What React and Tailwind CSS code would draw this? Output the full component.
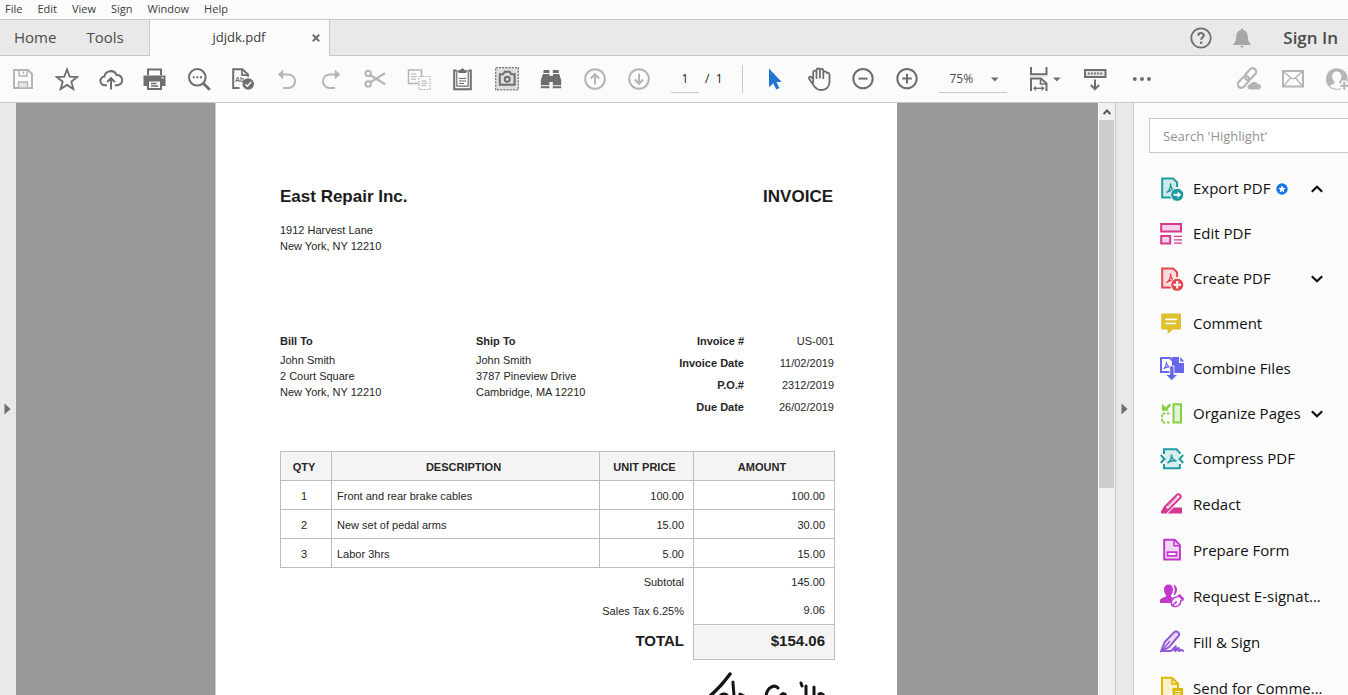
import React from "react";

/* ---------- shared svg wrappers ---------- */

function Svg({ children, className = "", size = 24 }) {
  return (
    <svg
      width={size}
      height={size}
      viewBox="0 0 24 24"
      fill="none"
      stroke="currentColor"
      strokeWidth="2"
      aria-hidden="true"
      className={"shrink-0 " + className}
    >
      {children}
    </svg>
  );
}

function Caret({ className = "" }) {
  return (
    <svg width="8" height="5" viewBox="0 0 8 5" aria-hidden="true" className={className}>
      <path d="M0 0.5h7.6L3.8 4.5z" fill="#6e6e6e" />
    </svg>
  );
}

/* ---------- toolbar icons ---------- */

const SaveIcon = () => (
  <Svg>
    <path d="M3 3h14l4 4v14H3z" />
    <path d="M8 3v6h8V3M12.5 4.5v2.5" strokeWidth="1.5" />
    <path d="M7.5 21v-6h9v6z" fill="#e4e4e4" strokeWidth="1.3" />
  </Svg>
);
const StarIcon = () => (
  <Svg>
    <path strokeWidth="1.8" d="M12 2.4l2.7 7.3 7.6.3-6 4.7 2.1 7.4L12 17.9l-6.4 4.2 2.1-7.4-6-4.7 7.6-.3z" />
  </Svg>
);
const CloudUpIcon = () => (
  <Svg>
    <path d="M8 18.2H6a4.3 4.3 0 0 1-.6-8.6A6.4 6.4 0 0 1 17.6 8a5.1 5.1 0 0 1 1 10.2H16" />
    <path d="M12 22.5V12M8.2 15l3.8-3.8 3.8 3.8" />
  </Svg>
);
const PrintIcon = () => (
  <Svg>
    <path d="M5 8V2.5h13V8" />
    <path d="M.5 8.500h22V19H18v-4.500H5V19H.5z" fill="currentColor" stroke="none" />
    <path d="M5 13.500h13V22H5z" fill="#fbfbfb" />
    <path d="M8 16.500h5.500M8 19h7" strokeWidth="1.3" />
    <path d="M18.500 10.800h2" stroke="#fbfbfb" strokeWidth="1.4" />
  </Svg>
);
const SearchIcon = () => (
  <Svg>
    <circle cx="10.3" cy="10.3" r="8.3" />
    <path d="M16.4 16.4l6.4 6.4" strokeWidth="2.8" />
    <path d="M5.8 10.3h9.4" strokeDasharray="2 1.6" />
  </Svg>
);
const SpellIcon = () => (
  <Svg>
    <path d="M8.5 21H2.2V2.2h9.3L17 7.6v2.2" />
    <path d="M11 2.5v5.6h5.8" strokeWidth="1.6" />
    <text x="4" y="15.4" fontSize="7" fontWeight="700" fontFamily="Liberation Sans, sans-serif" fill="currentColor" stroke="none">Ab</text>
    <circle cx="17.2" cy="17" r="5.8" fill="currentColor" stroke="none" />
    <path d="M14.4 17.2l2 2 3.7-4.2" stroke="#fbfbfb" strokeWidth="1.5" />
  </Svg>
);
const UndoPath = () => (
  <>
    <path d="M2.8 7.4L8.2 2.4v10z" fill="currentColor" stroke="none" />
    <path d="M8 7.4h5.3a6.7 6.7 0 0 1 0 13.6H8" />
  </>
);
const UndoIcon = () => (
  <Svg>
    <UndoPath />
  </Svg>
);
const RedoIcon = () => (
  <Svg>
    <g transform="translate(24 0) scale(-1 1)">
      <UndoPath />
    </g>
  </Svg>
);
const CutIcon = () => (
  <Svg>
    <circle cx="5.2" cy="6.4" r="2.7" />
    <circle cx="5.2" cy="17" r="2.7" />
    <path d="M7.2 8L22 17.3M7.2 15.4L22 6.1" strokeWidth="2.3" />
  </Svg>
);
const CopyIcon = () => (
  <Svg>
    <path d="M11.5 16.5h-10V3h13v7" strokeWidth="1.5" />
    <path d="M4 7h5M4 9.7h6M4 12.3h5" strokeWidth="1" />
    <path d="M12 9.5h11v13H12z" strokeWidth="1.2" strokeDasharray="2 1.2" />
    <path d="M14.5 14h4.5M14.5 16.2h6M14.5 18.5h4.5" strokeWidth="1" />
  </Svg>
);
const ClipboardIcon = () => (
  <Svg>
    <path d="M5.500 3.600H3.200v18.700h16.600V3.600h-2.300" />
    <path d="M5.800 4h11.400v15.200H5.800z" strokeWidth="1.2" />
    <path d="M7.500 2.900h2.100a1.900 1.900 0 0 1 3.700 0h2.100v3H7.500z" fill="currentColor" stroke="none" />
    <path d="M8 11.500h7M8 14h7M8 16.500h5" strokeWidth="1.1" />
  </Svg>
);
const SnapshotIcon = () => (
  <Svg>
    <path d="M.7.7h22.6v22.1H.7z" fill="#dedede" strokeWidth="1.2" strokeDasharray="2 1.2" />
    <path d="M4.8 7.2h3.4l1.6-2.5h4.8l1.6 2.5h3.4v10.6H4.8z" />
    <circle cx="12.2" cy="12.2" r="2.5" strokeWidth="2" />
  </Svg>
);
const BinocularsIcon = () => (
  <Svg>
    <g fill="currentColor" stroke="none">
      <path d="M4.5 3h6v3h-6zM13.8 3h6v3h-6z" />
      <path d="M4 7h6.5v1.8H14V7h6.2l2 6v5.3h-8.4V15h-3.4v3.3H1.8V13z" />
      <path d="M1.8 19.3h8.6v2H1.8zM13.8 19.3h8.4v2h-8.4z" />
    </g>
  </Svg>
);
const UpIcon = () => (
  <Svg>
    <circle cx="12" cy="12" r="9.8" />
    <path d="M12 17.6V7.5M7.8 11.5L12 7.2l4.2 4.3" />
  </Svg>
);
const DownIcon = () => (
  <Svg>
    <circle cx="12" cy="12" r="9.8" />
    <path d="M12 6.4v10.1M7.8 12.5l4.2 4.3 4.2-4.3" />
  </Svg>
);
const CursorIcon = () => (
  <Svg>
    <path d="M6 1.5v18.7l4.3-4 2.9 6.3 3.2-1.5-2.9-6h5.2z" fill="#1f76d3" stroke="none" />
  </Svg>
);
const HandIcon = () => (
  <Svg>
    <path
      strokeWidth="1.8"
      strokeLinecap="round"
      strokeLinejoin="round"
      d="M6.2 15.5V5.2a1.6 1.6 0 0 1 3.3 0v6M9.5 10.5V3.2a1.7 1.7 0 0 1 3.4 0v7.5M12.9 10.5V3.6a1.7 1.7 0 0 1 3.4 0v7.6M16.3 11V6.2a1.7 1.7 0 0 1 3.5-.2c.4-.5 2.7-.3 2.7 1.4v7.4c0 4.6-3 8.2-7.6 8.2-4 0-6-1.2-8.2-4.6l-4.6-6.6c-1-1.5.9-2.9 2.2-1.8l2 2"
    />
  </Svg>
);
const MinusIcon = () => (
  <Svg>
    <circle cx="12" cy="11.6" r="9.7" />
    <path d="M7.5 11.6h9" />
  </Svg>
);
const PlusIcon = () => (
  <Svg>
    <circle cx="12" cy="11.6" r="9.7" />
    <path d="M7.2 11.6h9.6M12 6.8v9.6" />
  </Svg>
);
const FitIcon = () => (
  <Svg>
    <path d="M2 0v7.2h15.5V0" />
    <path d="M1 8.8h17.5" stroke="#dcdcdc" strokeWidth="1.5" />
    <path d="M2 24V11.5h10l5.5 5V24" />
    <path d="M11.5 11.5v5.5h6" strokeWidth="1.6" />
    <path d="M6 21.3h8" strokeWidth="1.4" />
    <path d="M4 21.3l3-2.6v5.2zM15.6 21.3l-3-2.6v5.2z" fill="currentColor" stroke="none" />
  </Svg>
);
const ScrollIcon = () => (
  <Svg>
    <path d="M2 3h20.5v7H2z" fill="#e4e4e4" />
    <path d="M4.8 6.5h15" strokeDasharray="1.8 1.3" strokeWidth="1.8" />
    <path d="M12 12.5v9M7.8 18l4.2 4 4.2-4" />
  </Svg>
);
const MoreIcon = () => (
  <Svg>
    <g fill="currentColor" stroke="none">
      <circle cx="4.8" cy="12" r="2" />
      <circle cx="12" cy="12" r="2" />
      <circle cx="19" cy="12" r="2" />
    </g>
  </Svg>
);
const LinkIcon = () => (
  <Svg>
    <g transform="rotate(-48 10 11)" strokeWidth="2.2">
      <rect x="-2" y="7.5" width="13.500" height="7" rx="3.5" />
      <rect x="8.500" y="7.5" width="13.500" height="7" rx="3.5" />
    </g>
    <path d="M13 23a3 3 0 0 1 0-6.200 4.400 4.400 0 0 1 8-.2 3.200 3.200 0 0 1 .8 6.400z" fill="currentColor" stroke="#fbfbfb" strokeWidth="1" />
  </Svg>
);
const MailIcon = () => (
  <Svg>
    <path d="M2 4h20v15.5H2z" />
    <path d="M2.5 4.5l7.2 6.2a3.6 3.6 0 0 0 4.6 0l7.2-6.2M2.5 19l7-8M21.5 19l-7-8" strokeWidth="1.3" />
  </Svg>
);
const PersonIcon = () => (
  <Svg>
    <circle cx="11.8" cy="12" r="10.8" fill="currentColor" stroke="none" />
    <path d="M11.8 4.6c-3 0-4.6 2.3-4.6 4.9 0 2.1.9 4.1 2.2 5.3v1.6c-1.8.9-3.9 1.3-4.8 2.6a10 10 0 0 0 14.4 0c-.9-1.3-3-1.7-4.8-2.6v-1.6c1.3-1.2 2.2-3.2 2.2-5.3 0-2.6-1.6-4.9-4.6-4.9z" fill="#fbfbfb" stroke="none" />
    <path d="M19 13.5v10M14 18.7h10" stroke="#fbfbfb" strokeWidth="5" />
    <path d="M19.2 14.8v8M15.2 18.8h8.8" />
  </Svg>
);

/* ---------- tool panel icons ---------- */

const pdfGlyph = "M6.4 15.6c2.4-1.4 4.3-4.8 4.2-9.2 0 4 1.9 6.6 5 7.2-3-.8-6.6.1-9.2 2z";

const ExportIcon = () => (
  <Svg>
    <path d="M11 20.6H2.2V1.4h10.9l4 4V10" fill="#cfe8e9" stroke="#1f9aa0" />
    <path d={pdfGlyph} stroke="#1f9aa0" strokeWidth="1.3" />
    <circle cx="17.2" cy="17.8" r="6.6" fill="#1f9aa0" stroke="#fbfbfb" strokeWidth="1" />
    <path d="M13.5 17.8h5" stroke="#fff" />
    <path d="M17.6 14.6l3.6 3.2-3.6 3.2z" fill="#fff" stroke="none" />
  </Svg>
);
const CreateIcon = () => (
  <Svg>
    <path d="M11 20.6H2.2V1.4h10.9l4 4V10" fill="#f9dcde" stroke="#e34850" />
    <path d={pdfGlyph} stroke="#e34850" strokeWidth="1.3" />
    <circle cx="17.2" cy="17.8" r="6.6" fill="#e34850" stroke="#fbfbfb" strokeWidth="1" />
    <path d="M13.4 17.8h7.6M17.2 14v7.6" stroke="#fff" />
  </Svg>
);
const EditIcon = () => (
  <Svg>
    <g stroke="#d83790">
      <path d="M1.2 2h19.8v7.6H1.2zM1.2 14h9v7.6h-9z" fill="#f5d2e7" />
      <path d="M14 14.4h8M14 17.8h8M14 21.2h8" strokeWidth="1.3" />
    </g>
  </Svg>
);
const CommentIcon = () => (
  <Svg>
    <path d="M2.5 1.5h17.2q1.3 0 1.3 1.3v13.4q0 1.3-1.3 1.3H13L7.6 22v-4.5H2.5q-1.3 0-1.3-1.3V2.800q0-1.300 1.3-1.300z" fill="#dfbf2b" stroke="none" />
    <path d="M5.2 7.400h12M5.200 11.500h10.500" stroke="#fff" strokeWidth="1.600" />
  </Svg>
);
const CombineIcon = () => (
  <Svg>
    <path d="M12 0h7v6h5v10H12z" fill="#6767ec" stroke="none" />
    <path d="M20.200 0v4.600h4z" fill="#6767ec" stroke="none" />
    <path d="M1 1h9l3 3v11H1z" fill="#fbfbfb" stroke="#6767ec" />
    <path d="M3.500 11.800c2-1 3-3.800 2.800-7 .2 3 1.600 4.800 4.200 5.200-2.500-.4-4.800.2-7 1.800z" stroke="#6767ec" strokeWidth="1.100" />
    <path d="M9.700 9h4.300v8.500h4l-6.300 6-6.200-6h4.200z" fill="#6767ec" stroke="#fbfbfb" strokeWidth="0.800" />
  </Svg>
);
const OrganizeIcon = () => (
  <Svg>
    <g stroke="#84cf44">
      <path d="M13.500 2.200H21v18.300h-7.500z" fill="#e3f3d6" />
      <path d="M9.500 11.500H2.200v9h8.300" strokeDasharray="2.600 1.600" />
      <path d="M10.300 2.500L6 6.800" strokeWidth="2.600" />
      <path d="M2 1.800v7h7z" fill="#84cf44" stroke="none" />
    </g>
  </Svg>
);
const CompressIcon = () => (
  <Svg>
    <path d="M5 3.300h11l2.800 3v14H5z" fill="#d9edee" stroke="none" />
    <path d="M4 7V2.300h12.500l3.300 3.500V7M4 17v4.300h15.800V17" stroke="#1f9aa0" />
    <path d="M7.500 16c2.400-1.300 4.200-4 4-8.500 .2 4 2 5.800 5 6.500-3-.7-6.400 0-9 2z" stroke="#1f9aa0" strokeWidth="1.500" />
    <path d="M.8 8l3.700 4-3.700 4M23.200 8l-3.700 4 3.700 4" stroke="#1f9aa0" />
  </Svg>
);
const RedactIcon = () => (
  <Svg>
    <path d="M4.500 15.300L16.800 2.900a2.200 2.200 0 0 1 3.200 3.200L7.700 18.500z" fill="#fbeaf3" stroke="#d83790" />
    <path d="M8 13.800L16.500 5.300" stroke="#e98abf" strokeWidth="1.200" />
    <path d="M3.800 15.200l4.200 4.200L6.500 21.500H1v-2.300zM13.500 15.500H22v6H7.500z" fill="#d83790" stroke="none" />
  </Svg>
);
const FormIcon = () => (
  <Svg>
    <g stroke="#c038cc">
      <path d="M4.200 1.700h10.500l5.200 5.400v14.400H4.200z" fill="#f2d7f4" />
      <path d="M14 2v5.800h5.700" strokeWidth="1.600" />
      <path d="M7.500 14.200h9v3.600h-9z" fill="#fff" strokeWidth="1.800" />
    </g>
  </Svg>
);
const RequestIcon = () => (
  <Svg>
    <g fill="#c038cc" stroke="none">
      <path d="M8.500.5c2.900 0 4.500 2 4.500 5 0 2.400-.9 4.500-2 5.600v1.700l1.600.8-1.800 5.400H0v-2.500c0-2 3.500-2.800 6-4v-1.400C4.900 10 4 7.900 4 5.500c0-3 1.600-5 4.500-5z" />
      <path d="M13 .8c2.500.3 4 2 4 4.800 0 2-.7 3.800-1.800 5l-1.400 1c-.3-1 .9-2.600.9-6 0-2-.6-3.600-1.700-4.800z" />
    </g>
    <g stroke="#c038cc" strokeWidth="1.500">
      <path d="M11.700 21c-1-4 1-8 5-8l3-2 3.500 3.500-2.400 2.500c0 4-3 6.300-7.300 5.200z" fill="#fbfbfb" />
      <path d="M12 22l4.700-4.600M18.500 11.500l5 5" />
    </g>
  </Svg>
);
const SignIcon = () => (
  <Svg>
    <path d="M1.200 21l3.400-9L14 2.400a2.700 2.700 0 0 1 4.300 3.800L9 17.300z" fill="#e8dcf7" stroke="#9256d9" />
    <path d="M1.500 21L10 11" stroke="#9256d9" strokeWidth="1.300" />
    <path d="M1 21h10l4.800-4.600c.8 1.300-2.500 4.200-.8 4.600 1.400.3 2.500-3.300 3.500-3 .9.300-.5 2.900.5 3 .9.100 1.300-1.500 2.100-1.300.6.200.3 1.300 2.900 1" stroke="#9256d9" />
  </Svg>
);
const SendIcon = () => (
  <Svg>
    <path d="M2 22V1.700h10l6 6V12M2 22h9" fill="#f7f0cb" stroke="#ddb900" />
    <path d="M12 2v6h6" stroke="#ddb900" strokeWidth="1.600" />
    <path d="M12.500 12H23v10H12.500z" fill="#ddb900" stroke="none" />
    <path d="M15 15.500h5.500M15 18h5.500" stroke="#fff" strokeWidth="1.200" />
  </Svg>
);

function Chevron({ up }) {
  return (
    <svg width="12" height="8" viewBox="0 0 12 8" fill="none" stroke="#111" strokeWidth="2.200" aria-hidden="true" className="shrink-0">
      <path d={up ? "M.8 6.700L6 1.700l5.200 5" : "M.8 1.300L6 6.300l5.200-5"} />
    </svg>
  );
}

/* ---------- data ---------- */

const menus = ["File", "Edit", "View", "Sign", "Window", "Help"];

const fileTools = [
  ["Save", SaveIcon, true],
  ["Star file", StarIcon],
  ["Upload to cloud", CloudUpIcon],
  ["Print", PrintIcon],
  ["Find text", SearchIcon],
  ["Check spelling", SpellIcon],
  ["Undo", UndoIcon, true],
  ["Redo", RedoIcon, true],
  ["Cut", CutIcon, true],
  ["Copy", CopyIcon, true],
  ["Paste", ClipboardIcon],
  ["Snapshot", SnapshotIcon],
  ["Advanced search", BinocularsIcon],
  ["Previous page", UpIcon, true],
  ["Next page", DownIcon, true],
];

const viewTools = [
  ["Select", CursorIcon],
  ["Pan", HandIcon],
  ["Zoom out", MinusIcon],
  ["Zoom in", PlusIcon],
];

const shareTools = [
  ["Share link", LinkIcon, true],
  ["Send by email", MailIcon, true],
  ["Invite people", PersonIcon, true],
];

const panelTop = [
  { name: "Export PDF", Icon: ExportIcon, badge: true, chevron: "up" },
  { name: "Edit PDF", Icon: EditIcon },
  { name: "Create PDF", Icon: CreateIcon, chevron: "down" },
  { name: "Comment", Icon: CommentIcon },
  { name: "Combine Files", Icon: CombineIcon },
  { name: "Organize Pages", Icon: OrganizeIcon, chevron: "down" },
  { name: "Compress PDF", Icon: CompressIcon },
];

const panelBottom = [
  { name: "Redact", Icon: RedactIcon },
  { name: "Prepare Form", Icon: FormIcon },
  { name: "Request E-signat...", Icon: RequestIcon },
  { name: "Fill & Sign", Icon: SignIcon },
  { name: "Send for Comme...", Icon: SendIcon },
];

const lines = [
  ["1", "Front and rear brake cables", "100.00", "100.00"],
  ["2", "New set of pedal arms", "15.00", "30.00"],
  ["3", "Labor 3hrs", "5.00", "15.00"],
];

const details = [
  ["Invoice #", "US-001"],
  ["Invoice Date", "11/02/2019"],
  ["P.O.#", "2312/2019"],
  ["Due Date", "26/02/2019"],
];

/* ---------- parts ---------- */

function ToolButton({ label, Icon, dim }) {
  return (
    <button
      type="button"
      aria-label={label}
      className={"flex h-full w-11 shrink-0 items-center justify-center " + (dim ? "text-[#b5b5b5]" : "text-[#6e6e6e]")}
    >
      <Icon />
    </button>
  );
}

function MenuBar() {
  return (
    <nav aria-label="Application menu" className="flex h-[19px] shrink-0 items-center gap-[15px] px-[5px] pb-[2px] text-[11px] leading-4 text-[#3c3c3c]">
      {menus.map((m) => (
        <button key={m} type="button">
          {m}
        </button>
      ))}
    </nav>
  );
}

function TabBar() {
  return (
    <div className="flex h-[37px] shrink-0 border-t border-[#c8c8c8] text-[15px] text-[#4b4b4b]">
      <div className="flex w-[150px] shrink-0 items-center gap-[30px] border-r border-b border-[#c8c8c8] bg-[#e9e9e9] pl-[14px]">
        <button type="button">Home</button>
        <button type="button">Tools</button>
      </div>
      <div className="flex w-[179px] shrink-0 items-center bg-[#fbfbfb] pr-[9px] pl-4">
        <span className="flex-1 text-center text-[13px] text-[#3c3c3c]">jdjdk.pdf</span>
        <button type="button" aria-label="Close tab" className="text-[#6e6e6e]">
          <svg width="8" height="8" viewBox="0 0 8 8" stroke="currentColor" strokeWidth="2" aria-hidden="true">
            <path d="M.8.8l6.400 6.400M7.200.8L.8 7.200" />
          </svg>
        </button>
      </div>
      <div className="flex flex-1 items-center justify-end border-b border-l border-[#c8c8c8] bg-[#e9e9e9] pr-[10px]">
        <button type="button" aria-label="Help" className="text-[#6e6e6e]">
          <svg width="22" height="22" viewBox="0 0 22 22" fill="none" stroke="currentColor" aria-hidden="true">
            <circle cx="11" cy="11" r="9.700" strokeWidth="1.800" />
            <path d="M8.200 8.600c.2-3.400 5.700-3.200 5.600-.2-.1 1.900-2.600 2-2.600 4.400" strokeWidth="2" />
            <path d="M10 14.600h2.300v2.200H10z" fill="currentColor" stroke="none" />
          </svg>
        </button>
        <button type="button" aria-label="Notifications" className="ml-[21px] text-[#a6a6a6]">
          <svg width="18" height="20" viewBox="0 0 18 20" fill="currentColor" aria-hidden="true">
            <path d="M8 .5h2v1.600c3 .6 4.600 2.900 4.700 5.600 0 4 .6 6 2.700 7.800v1.400H.6v-1.400c2.100-1.800 2.700-3.800 2.700-7.800C3.400 5 5 2.700 8 2.100zM6.600 17.900h4.800L9 20z" />
          </svg>
        </button>
        <button type="button" className="ml-8 text-[17px] font-semibold">Sign In</button>
      </div>
    </div>
  );
}

function Toolbar() {
  return (
    <div className="flex h-[47px] shrink-0 items-center overflow-hidden border-b border-[#c8c8c8] pl-px text-[12px] text-[#3c3c3c]">
      {fileTools.map(([label, Icon, dim]) => (
        <ToolButton key={label} label={label} Icon={Icon} dim={dim} />
      ))}
      <label className="ml-[10px] flex shrink-0 items-center gap-[6px] text-[#222]">
        <input aria-label="Page number" defaultValue="1" className="h-7 w-7 border-b border-[#c8c8c8] bg-transparent text-center outline-none" />
        <span>/&nbsp; 1</span>
      </label>
      <span className="mr-[10px] ml-[19px] h-7 w-px shrink-0 bg-[#c8c8c8]" />
      {viewTools.map(([label, Icon, dim]) => (
        <ToolButton key={label} label={label} Icon={Icon} dim={dim} />
      ))}
      <div className="relative ml-[10px] w-[68px] shrink-0">
        <select aria-label="Zoom level" defaultValue="75%" className="h-7 w-full appearance-none border-b border-[#c8c8c8] bg-transparent pl-[11px] text-[#4b4b4b] outline-none">
          <option>50%</option>
          <option>75%</option>
          <option>100%</option>
        </select>
        <Caret className="pointer-events-none absolute top-3 right-2" />
      </div>
      <button type="button" aria-label="Fit page" className="ml-[22px] flex shrink-0 items-center text-[#6e6e6e]">
        <FitIcon />
        <Caret />
      </button>
      <div className="ml-3 flex h-full shrink-0 gap-[3px]">
        <ToolButton label="Page scrolling" Icon={ScrollIcon} />
        <ToolButton label="More tools" Icon={MoreIcon} />
      </div>
      <div className="-mr-[11px] ml-auto flex h-full shrink-0">
        {shareTools.map(([label, Icon, dim]) => (
          <ToolButton key={label} label={label} Icon={Icon} dim={dim} />
        ))}
      </div>
    </div>
  );
}

function Address({ title, rows }) {
  return (
    <div>
      <h2 className="font-bold">{title}</h2>
      <p className="mt-[3px]">
        {rows.map((r) => (
          <span key={r} className="block">
            {r}
          </span>
        ))}
      </p>
    </div>
  );
}

function Signature() {
  return (
    <svg width="124" height="60" viewBox="0 0 124 60" fill="none" stroke="#151515" strokeWidth="3" strokeLinecap="round" strokeLinejoin="round" aria-label="Signature">
      <path d="M24 2C19 9 11 18 4 24" strokeWidth="3.500" />
      <path d="M27 10c0 5 1 9 1 16M14 24c2-2 5-3 7-1M34 22l4 2" />
      <path d="M72 16c-3-4-11-1-12 8M75 23c2-2 4-2 5 1" />
      <path d="M95 11l1 3M100 14v14M108 15v13M113 22c2-1 4 0 5 2" />
    </svg>
  );
}

function Invoice() {
  return (
    <article className="w-[682px] shrink-0 border-l border-[#d0d0d0] bg-white pt-[82px] pr-[62px] pl-16 font-['Liberation_Sans',Arial,sans-serif] text-[11px] leading-4 text-[#262626]">
      <header className="flex justify-between pr-[2px] text-[17px] leading-6 font-bold text-[#1c1c1c]">
        <h1>East Repair Inc.</h1>
        <span>INVOICE</span>
      </header>
      <p className="mt-[13px]">
        1912 Harvest Lane
        <br />
        New York, NY 12210
      </p>

      <section className="mt-[79px] flex">
        <div className="w-[196px]">
          <Address title="Bill To" rows={["John Smith", "2 Court Square", "New York, NY 12210"]} />
        </div>
        <Address title="Ship To" rows={["John Smith", "3787 Pineview Drive", "Cambridge, MA 12210"]} />
        <dl className="-mt-[3px] ml-auto grid grid-cols-[auto_90px] pr-px text-right leading-[22px]">
          {details.map(([k, v]) => (
            <React.Fragment key={k}>
              <dt className="font-bold">{k}</dt>
              <dd>{v}</dd>
            </React.Fragment>
          ))}
        </dl>
      </section>

      <table className="mt-[33px] w-full table-fixed border-collapse">
        <colgroup>
          <col className="w-[51px]" />
          <col />
          <col className="w-[94px]" />
          <col className="w-[141px]" />
        </colgroup>
        <thead>
          <tr className="h-[29px] bg-[#f4f4f4]">
            {["QTY", "DESCRIPTION", "UNIT PRICE", "AMOUNT"].map((h) => (
              <th key={h} scope="col" className="border border-[#bdbdbd] pt-[2px] pr-1 pb-0 pl-0 text-center">
                {h}
              </th>
            ))}
          </tr>
        </thead>
        <tbody>
          {lines.map(([qty, text, price, amount]) => (
            <tr key={qty} className="h-[29px]">
              <td className="border border-[#bdbdbd] pt-[2px] pr-1 pb-0 pl-0 text-center">{qty}</td>
              <td className="border border-[#bdbdbd] pt-[2px] pr-0 pb-0 pl-[5px]">{text}</td>
              <td className="border border-[#bdbdbd] pt-[2px] pr-[9px] pb-0 pl-0 text-right">{price}</td>
              <td className="border border-[#bdbdbd] pt-[2px] pr-[9px] pb-0 pl-0 text-right">{amount}</td>
            </tr>
          ))}
          <tr className="h-[29px]">
            <td colSpan={3} className="py-0 pr-[9px] text-right">Subtotal</td>
            <td className="border-x border-[#bdbdbd] py-0 pr-[9px] text-right">145.00</td>
          </tr>
          <tr className="h-7">
            <td colSpan={3} className="py-0 pr-[9px] text-right">Sales Tax 6.25%</td>
            <td className="border-x border-[#bdbdbd] py-0 pr-[9px] text-right">9.06</td>
          </tr>
          <tr className="h-[35px] text-[15px] font-bold text-[#1c1c1c]">
            <td colSpan={3} className="pt-0 pr-[9px] pb-[2px] text-right">TOTAL</td>
            <td className="border border-[#bdbdbd] bg-[#f4f4f4] pt-0 pr-[9px] pb-[2px] text-right">$154.06</td>
          </tr>
        </tbody>
      </table>
      <div className="mt-3 flex justify-end pr-[5px]">
        <Signature />
      </div>
    </article>
  );
}

function PanelRow({ name, Icon, badge, chevron }) {
  return (
    <div className="flex h-full items-center">
      <button type="button" className="flex items-center gap-[9px] whitespace-nowrap">
        <Icon />
        {name}
        {badge && (
          <svg width="12" height="12" viewBox="0 0 12 12" aria-hidden="true" className="-ml-[3px]">
            <circle cx="6" cy="6" r="5.700" fill="#1473e6" />
            <path d="M6 2.200l1.100 2.500 2.700.2-2.100 1.800.7 2.700L6 7.900 3.600 9.400l.7-2.700-2.100-1.800 2.700-.2z" fill="#fff" />
          </svg>
        )}
      </button>
      {chevron && (
        <button type="button" aria-label={"Toggle " + name} className="ml-auto">
          <Chevron up={chevron === "up"} />
        </button>
      )}
    </div>
  );
}

function ToolsPanel() {
  return (
    <aside className="w-[214px] shrink-0 overflow-hidden pt-[15px] pl-[15px]">
      <input
        type="search"
        aria-label="Search tools"
        placeholder="Search 'Highlight'"
        className="h-[35px] w-full border border-r-0 border-[#c8c8c8] bg-white pl-[13px] text-[13px] outline-none placeholder:text-[#929292]"
      />
      <ul className="mt-[13px] pr-[25px] pl-[11px] text-[15px] text-[#111]">
        {panelTop.map((row) => (
          <li key={row.name} className="h-[45px]">
            <PanelRow {...row} />
          </li>
        ))}
        {panelBottom.map((row) => (
          <li key={row.name} className="h-[46px]">
            <PanelRow {...row} />
          </li>
        ))}
      </ul>
    </aside>
  );
}

function PaneHandle({ label, className }) {
  return (
    <button type="button" aria-label={label} className={"flex shrink-0 items-center justify-center bg-[#e9e9e9] pt-5 " + className}>
      <svg width="7" height="12" viewBox="0 0 7 12" aria-hidden="true">
        <path d="M.5.500l6 5.500-6 5.500z" fill="#6e6e6e" />
      </svg>
    </button>
  );
}

export default function App() {
  return (
    <div className="flex h-screen flex-col overflow-hidden bg-[#fbfbfb] font-['Open_Sans','Noto_Sans',sans-serif]">
      <MenuBar />
      <TabBar />
      <Toolbar />
      <div className="flex min-h-0 flex-1">
        <PaneHandle label="Show navigation pane" className="w-4 pr-[2px]" />
        <main className="flex min-w-0 flex-1 justify-center overflow-hidden bg-[#999] pr-[2px]">
          <Invoice />
        </main>
        <div className="flex w-[17px] shrink-0 flex-col border-l border-white bg-[#f0f0f0]" aria-hidden="true">
          <span className="flex h-[17px] items-center justify-center">
            <svg width="8" height="6" viewBox="0 0 8 6" fill="none" stroke="#555" strokeWidth="2">
              <path d="M.6 5L4 1.500 7.400 5" />
            </svg>
          </span>
          <span className="min-h-0 flex-1">
            <span className="mr-px block h-[64%] bg-[#cdcdcd]" />
          </span>
        </div>
        <PaneHandle label="Hide tools pane" className="w-[19px] border-x border-[#c8c8c8]" />
        <ToolsPanel />
      </div>
    </div>
  );
}
